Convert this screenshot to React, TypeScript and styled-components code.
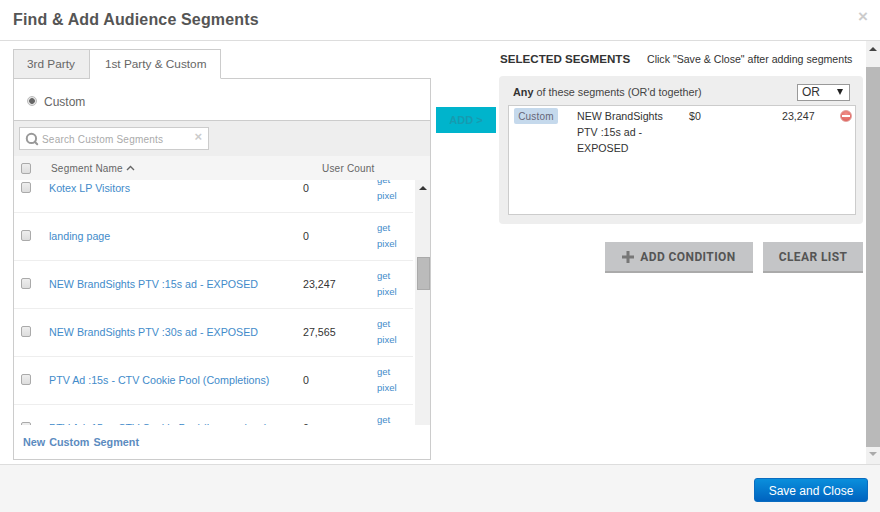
import styled, { createGlobalStyle } from "styled-components";
import { Search } from "lucide-react";

const segments = [
  { name: "Kotex LP Visitors", count: "0" },
  { name: "landing page", count: "0" },
  { name: "NEW BrandSights PTV :15s ad - EXPOSED", count: "23,247" },
  { name: "NEW BrandSights PTV :30s ad - EXPOSED", count: "27,565" },
  { name: "PTV Ad :15s - CTV Cookie Pool (Completions)", count: "0" },
  { name: "PTV Ad :15s - CTV Cookie Pool (Impressions)", count: "0" },
];

const App = () => {
  return (
    <_Modal>
      <GlobalStyle />
      <_Header>
        <_Title>Find &amp; Add Audience Segments</_Title>
        <_Close>×</_Close>
      </_Header>
      <_Body>
        <_Left>
          <_Tabs>
            <_Tab>3rd Party</_Tab>
            <_Tab $active>1st Party &amp; Custom</_Tab>
          </_Tabs>
          <_Panel>
            <_RadioRow>
              <_Radio />
              <span>Custom</span>
            </_RadioRow>
            <_SearchBand>
              <_SearchBox>
                <Search size={14} strokeWidth={3.4} color="#999" />
                <_SearchText>Search Custom Segments</_SearchText>
                <_SearchClear>×</_SearchClear>
              </_SearchBox>
            </_SearchBand>
            <_TableHead>
              <_Check />
              <_HeadName>
                Segment Name
                <svg width="9" height="6" viewBox="0 0 9 6">
                  <path d="M1 5l3.5-3.5L8 5" fill="none" stroke="#666" strokeWidth="1.4" />
                </svg>
              </_HeadName>
              <_HeadCount>User Count</_HeadCount>
            </_TableHead>
            <_ListArea>
              <_List>
                <_Rows>
                  {segments.map((s) => (
                    <_Row key={s.name}>
                      <_Check />
                      <_RowName>{s.name}</_RowName>
                      <_RowCount>{s.count}</_RowCount>
                      <_Pixel>get pixel</_Pixel>
                    </_Row>
                  ))}
                </_Rows>
              </_List>
              <_ListBar>
                <_ArrowUp $color="#333" />
                <_ListThumb />
              </_ListBar>
            </_ListArea>
            <_PanelFooter>New Custom Segment</_PanelFooter>
          </_Panel>
        </_Left>
        <_AddButton>ADD &gt;</_AddButton>
        <_Right>
          <_SelectedHead>
            <_SelectedTitle>SELECTED SEGMENTS</_SelectedTitle>
            <_Hint>Click "Save &amp; Close" after adding segments</_Hint>
          </_SelectedHead>
          <_Group>
            <_GroupHead>
              <span>
                <b>Any</b> of these segments (OR'd together)
              </span>
              <_Select>
                OR
                <_SelectArrow />
              </_Select>
            </_GroupHead>
            <_GroupBox>
              <_Badge>Custom</_Badge>
              <_SelName>NEW BrandSights PTV :15s ad - EXPOSED</_SelName>
              <_SelCost>$0</_SelCost>
              <_SelCount>23,247</_SelCount>
              <_Remove />
            </_GroupBox>
          </_Group>
          <_Actions>
            <_GrayButton $width={148}>
              <svg width="12" height="12" viewBox="0 0 12 12">
                <path d="M4.5 0h3v4.5H12v3H7.5V12h-3V7.5H0v-3h4.5z" fill="#777" />
              </svg>
              ADD CONDITION
            </_GrayButton>
            <_GrayButton $width={100}>CLEAR LIST</_GrayButton>
          </_Actions>
        </_Right>
        <_PageBar>
          <_ArrowUp $color="#444" />
          <_PageThumb />
          <_ArrowDown />
        </_PageBar>
      </_Body>
      <_Footer>
        <_SaveButton>Save and Close</_SaveButton>
      </_Footer>
    </_Modal>
  );
};

export default App;

const GlobalStyle = createGlobalStyle`
  html, body {
    margin: 0;
    padding: 0;
    background: #fff;
  }
  * {
    box-sizing: border-box;
  }
`;

const _Modal = styled.div`
  width: 880px;
  height: 512px;
  display: flex;
  flex-direction: column;
  overflow: hidden;
  font-family: "Liberation Sans", Arial, sans-serif;
  font-size: 11px;
  color: #333;
`;

const _Header = styled.div`
  height: 41px;
  flex: none;
  display: flex;
  align-items: center;
  justify-content: space-between;
  padding: 0 12px 1px 13px;
  border-bottom: 1px solid #ddd;
`;

const _Title = styled.div`
  font-size: 16px;
  font-weight: bold;
  letter-spacing: 0.15px;
  color: #555;
`;

const _Close = styled.div`
  font-size: 17px;
  font-weight: bold;
  color: #ccc;
  margin-top: -6px;
`;

const _Body = styled.div`
  flex: 1;
  min-height: 0;
  display: flex;
`;

const _Left = styled.div`
  width: 418px;
  flex: none;
  margin: 8px 0 0 13px;
  display: flex;
  flex-direction: column;
`;

const _Tabs = styled.div`
  display: flex;
  height: 30px;
  flex: none;
  position: relative;
  z-index: 1;
`;

const _Tab = styled.div<{ $active?: boolean }>`
  height: 30px;
  display: flex;
  align-items: center;
  padding: ${({ $active }) => ($active ? "0 13px 0 15px" : "0 14px 0 13px")};
  font-size: 11.8px;
  color: #666;
  background: ${({ $active }) => ($active ? "#fff" : "#eee")};
  border: 1px solid #ccc;
  border-left-width: ${({ $active }) => ($active ? "0" : "1px")};
  border-bottom-color: ${({ $active }) => ($active ? "#fff" : "#ccc")};
`;

const _Panel = styled.div`
  height: 382px;
  flex: none;
  margin-top: -1px;
  display: flex;
  flex-direction: column;
  border: 1px solid #ccc;
  background: #fff;
`;

const _RadioRow = styled.div`
  height: 42px;
  flex: none;
  display: flex;
  align-items: center;
  gap: 7px;
  padding: 5px 0 0 13px;
  font-size: 12px;
  color: #666;
  border-bottom: 1px solid #ccc;
`;

const _Radio = styled.span`
  width: 10px;
  height: 10px;
  border-radius: 50%;
  margin-top: -3px;
  background: radial-gradient(circle, #666 0 2.5px, #e6e6e6 3.2px);
  border: 1px solid #bbb;
`;

const _SearchBand = styled.div`
  height: 35px;
  flex: none;
  padding: 6px 0 0 5px;
  background: #eee;
`;

const _SearchBox = styled.div`
  width: 190px;
  height: 23px;
  display: flex;
  align-items: center;
  gap: 3px;
  padding: 0 6px 0 5px;
  background: #fff;
  border: 1px solid #ccc;
`;

const _SearchText = styled.span`
  flex: 1;
  padding-top: 1px;
  font-size: 10px;
  letter-spacing: 0.2px;
  color: #aaa;
`;

const _SearchClear = styled.span`
  font-size: 13px;
  font-weight: bold;
  color: #ccc;
  margin-top: -4px;
`;

const _TableHead = styled.div`
  height: 24px;
  flex: none;
  display: flex;
  align-items: center;
  padding: 0 0 0 7px;
  background: #f5f5f5;
  color: #666;
  font-size: 10px;
  letter-spacing: 0.2px;
`;

const _Check = styled.span`
  width: 10px;
  height: 11px;
  flex: none;
  border: 1px solid #aaa;
  border-radius: 2px;
  background: linear-gradient(#eee, #ddd);
`;

const _HeadName = styled.div`
  width: 271px;
  margin-left: 20px;
  display: flex;
  align-items: center;
  gap: 3px;
`;

const _HeadCount = styled.div``;

const _ListArea = styled.div`
  height: 245px;
  flex: none;
  display: flex;
  overflow: hidden;
`;

const _List = styled.div`
  width: 399px;
  flex: none;
  overflow: hidden;
`;

const _Rows = styled.div`
  margin-top: -15px;
`;

const _Row = styled.div`
  height: 48px;
  display: flex;
  align-items: center;
  padding: 0 0 2px 7px;
  border-bottom: 1px solid #eee;
`;

const _RowName = styled.div`
  width: 254px;
  margin-left: 18px;
  font-size: 10.7px;
  color: #428bca;
`;

const _RowCount = styled.div`
  width: 74px;
  font-size: 10.65px;
  color: #333;
`;

const _Pixel = styled.div`
  width: 30px;
  font-size: 9.5px;
  line-height: 16px;
  color: #428bca;
`;

const _ListBar = styled.div`
  width: 16px;
  flex: none;
  margin-left: 2px;
  display: flex;
  flex-direction: column;
  align-items: center;
  background: #f1f1f1;
`;

const _ArrowUp = styled.span<{ $color: string }>`
  width: 0;
  height: 0;
  flex: none;
  margin-top: 6px;
  border-left: 4px solid transparent;
  border-right: 4px solid transparent;
  border-bottom: 4px solid ${({ $color }) => $color};
`;

const _ArrowDown = styled.span`
  width: 0;
  height: 0;
  flex: none;
  margin-top: 5px;
  border-left: 4px solid transparent;
  border-right: 4px solid transparent;
  border-top: 4px solid #aaa;
`;

const _ListThumb = styled.div`
  width: 13px;
  height: 33px;
  flex: none;
  margin-top: 67px;
  background: #bbb;
  border: 1px solid #aaa;
`;

const _PanelFooter = styled.div`
  flex: 1;
  display: flex;
  align-items: center;
  padding-left: 9px;
  font-size: 10.8px;
  font-weight: bold;
  word-spacing: 1px;
  color: #5b8bc0;
`;

const _AddButton = styled.div`
  width: 60px;
  height: 26px;
  flex: none;
  margin: 66px 0 0 5px;
  display: flex;
  align-items: center;
  justify-content: center;
  background: #00b4cc;
  color: #169bb0;
  font-size: 11px;
  font-weight: bold;
`;

const _Right = styled.div`
  width: 364px;
  flex: none;
  margin-left: 3px;
  display: flex;
  flex-direction: column;
`;

const _SelectedHead = styled.div`
  height: 35px;
  flex: none;
  display: flex;
  align-items: center;
  padding: 0 0 0 1px;
`;

const _SelectedTitle = styled.div`
  width: 147px;
  font-size: 11.6px;
  font-weight: bold;
  color: #333;
`;

const _Hint = styled.div`
  font-size: 10.6px;
  color: #333;
`;

const _Group = styled.div`
  height: 148px;
  flex: none;
  padding: 7px 7px 9px 9px;
  border-radius: 4px;
  background: #eee;
`;

const _GroupHead = styled.div`
  height: 22px;
  display: flex;
  align-items: center;
  justify-content: space-between;
  padding: 0 6px 4px 5px;
  font-size: 10.8px;
  color: #444;

  b {
    color: #333;
  }
`;

const _Select = styled.div`
  width: 53px;
  height: 17px;
  display: flex;
  align-items: center;
  justify-content: space-between;
  padding: 0 6px 0 4px;
  background: #fff;
  border: 1px solid #999;
  font-size: 12px;
  color: #333;
`;

const _SelectArrow = styled.span`
  width: 0;
  height: 0;
  border-left: 3px solid transparent;
  border-right: 3px solid transparent;
  border-top: 6px solid #222;
`;

const _GroupBox = styled.div`
  height: 110px;
  display: flex;
  align-items: flex-start;
  padding: 2px 3px 0 5px;
  background: #fff;
  border: 1px solid #ccc;
  font-size: 10.65px;
  color: #333;
`;

const _Badge = styled.div`
  width: 44px;
  height: 16px;
  flex: none;
  display: flex;
  align-items: center;
  justify-content: center;
  border-radius: 2px;
  background: #c5d9ec;
  color: #667;
  font-size: 10px;
  letter-spacing: 0.2px;
`;

const _SelName = styled.div`
  width: 100px;
  flex: none;
  margin-left: 19px;
  line-height: 16px;
`;

const _SelCost = styled.div`
  width: 93px;
  flex: none;
  margin-left: 12px;
  line-height: 16px;
`;

const _SelCount = styled.div`
  width: 58px;
  flex: none;
  line-height: 16px;
`;

const _Remove = styled.span`
  width: 12px;
  height: 12px;
  flex: none;
  margin-top: 2px;
  border-radius: 50%;
  display: flex;
  align-items: center;
  justify-content: center;
  background: radial-gradient(circle at 50% 30%, #f0908a, #dc5a55);
  border: 1px solid #e3a09c;

  &::after {
    content: "";
    width: 8px;
    height: 2px;
    background: #fff;
  }
`;

const _Actions = styled.div`
  margin-top: 18px;
  display: flex;
  justify-content: flex-end;
  gap: 10px;
`;

const _GrayButton = styled.div<{ $width: number }>`
  width: ${({ $width }) => $width}px;
  height: 31px;
  display: flex;
  align-items: center;
  justify-content: center;
  gap: 6px;
  background: #c4c5c7;
  border-bottom: 2px solid #aaa;
  color: #555;
  font-family: Roboto, "Liberation Sans", sans-serif;
  font-size: 12px;
  font-weight: 700;
  letter-spacing: 0.4px;
`;

const _PageBar = styled.div`
  width: 14px;
  flex: none;
  margin-left: 3px;
  display: flex;
  flex-direction: column;
  align-items: center;
  background: #f1f1f1;
`;

const _PageThumb = styled.div`
  width: 14px;
  height: 380px;
  flex: none;
  margin-top: 16px;
  background: #b9b9b9;
`;

const _Footer = styled.div`
  height: 48px;
  flex: none;
  display: flex;
  justify-content: flex-end;
  align-items: center;
  padding: 3px 12px 0 0;
  background: #f5f5f5;
  border-top: 1px solid #ddd;
`;

const _SaveButton = styled.div`
  width: 114px;
  height: 24px;
  display: flex;
  align-items: center;
  justify-content: center;
  padding-top: 1px;
  border-radius: 3px;
  background: linear-gradient(#0a8fdc, #0063bf);
  border: 1px solid #0a6cc0;
  color: #fff;
  font-size: 12px;
`;
